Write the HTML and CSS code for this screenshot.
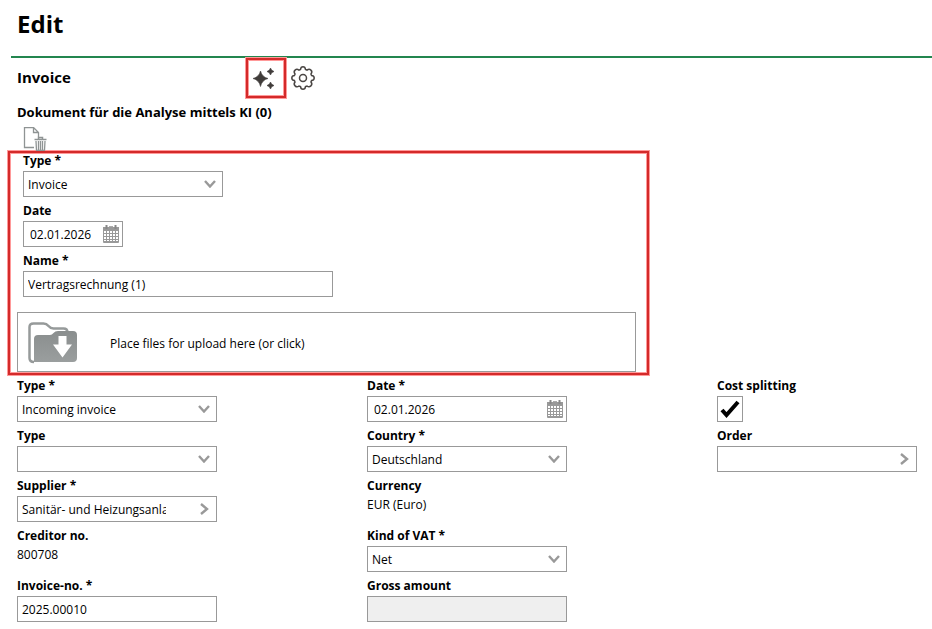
FILE: index.html
```html
<!DOCTYPE html>
<html lang="en">

<head>
    <meta charset="UTF-8">
    <meta name="viewport" content="width=device-width, initial-scale=1.0">
    <title>Edit</title>
    <link rel="stylesheet" href="styles.css">
</head>

<body>

    <!-- shared icons -->
    <svg class="sprite" aria-hidden="true">
        <symbol id="down" viewBox="0 0 12 8">
            <path d="M1 1l5 5.5L11 1" fill="none" stroke="#999" stroke-width="2.4" />
        </symbol>
        <symbol id="right" viewBox="0 0 9 12">
            <path d="M1 1l6 5L1 11" fill="none" stroke="#999" stroke-width="2.4" />
        </symbol>
        <symbol id="calendar" viewBox="0 0 16 18">
            <path d="M0 2h16v15q0 1-1 1H1q-1 0-1-1z" fill="#999" />
            <path d="M3.5 0v4M12.5 0v4" stroke="#888" stroke-width="2" />
            <path d="M6 1.500h4" stroke="#aaa" />
            <path d="M1 6h2v2H1zM4 6h2v2H4zM7 6h2v2H7zM10 6h2v2h-2zM13 6h2v2h-2zM1 9h2v2H1zM4 9h2v2H4zM7 9h2v2H7zM10 9h2v2h-2zM13 9h2v2h-2zM1 12h2v2H1zM4 12h2v2H4zM7 12h2v2H7zM10 12h2v2h-2zM13 12h2v2h-2zM1 15h2v1H1zM4 15h2v1H4zM7 15h2v1H7zM10 15h2v1h-2zM13 15h2v1h-2z" fill="#fff" />
        </symbol>
    </svg>

    <header class="page-header">
        <h1>Edit</h1>
    </header>

    <main>
        <div class="section-head">
            <h2>Invoice</h2>
            <button type="button" class="tool marked" aria-label="AI analysis">
                <svg width="22" height="24" viewBox="0 0 22 24">
                    <path d="M7.500 5q1.500 6 7.500 7.500Q9 14 7.500 20.500 6 14 0 12.500 6 11 7.500 5z" fill="#403c3a" stroke="#403c3a" stroke-width=".6" />
                    <path d="M17.500 2q.6 2.700 3.500 3.500-2.900.8-3.500 3.500-.6-2.700-3.500-3.500 2.900-.8 3.500-3.500zM17.500 16q.6 2.700 3.500 3.500-2.900.8-3.500 3.500-.6-2.700-3.500-3.500 2.900-.8 3.500-3.500z" fill="#403c3a" stroke="#403c3a" stroke-width=".6" />
                </svg>
            </button>
            <button type="button" class="tool" aria-label="Settings">
                <svg width="24" height="24" viewBox="0 0 24 24" fill="none" stroke="#4a4644" stroke-width="1.500">
                    <path d="M9.500 3.500Q9.800.8 12 .8t2.500 2.700l1.500.7q2.100-1.700 3.900-.1t.1 3.900l.6 1.500q2.600.3 2.600 2.500t-2.600 2.500L20 16q1.700 2.200-.1 3.900t-3.900.1l-1.500.6q-.3 2.600-2.500 2.600t-2.500-2.600L8 20q-2.100 1.700-3.900-.1T4 16l-.6-1.500Q.8 14.200.8 12t2.600-2.500L4 8Q2.300 5.800 4.100 4.100T8 4.200z" />
                    <circle cx="12" cy="12" r="3.500" />
                </svg>
            </button>
        </div>

        <h3>Dokument für die Analyse mittels KI (0)</h3>
        <button type="button" class="delete" aria-label="Delete document">
            <svg width="24" height="24" viewBox="0 0 24 24" fill="none" stroke="#8f9494">
                <path d="M11 20.500H1.500V.5h9l5 5V10M10.500.5v5h5" stroke-width="1.300" />
                <path d="M11.500 12.500h12M15.500 12v-1.500h4V12" stroke-width="1.500" />
                <path d="M13 14l.5 9.500h8L22 14M15.500 14v9M17.500 14v9M19.500 14v9" stroke-width="1.300" />
            </svg>
        </button>

        <section class="document">
            <div class="fields">
                <div class="field">
                    <label for="docType">Type *</label>
                    <div class="control">
                        <select id="docType"><option>Invoice</option></select>
                        <svg class="arrow"><use href="#down" /></svg>
                    </div>
                </div>
                <div class="field">
                    <label for="docDate">Date</label>
                    <div class="control short">
                        <input type="text" id="docDate" class="date" value="02.01.2026">
                        <svg class="calendar"><use href="#calendar" /></svg>
                    </div>
                </div>
                <div class="field">
                    <label for="docName">Name *</label>
                    <div class="control long">
                        <input type="text" id="docName" value="Vertragsrechnung (1)">
                    </div>
                </div>
            </div>
            <button type="button" class="upload">
                <svg width="50" height="42" viewBox="0 0 50 42">
                    <defs>
                        <linearGradient id="folder" x2="0" y2="1">
                            <stop offset="0" stop-color="#8a8e8e" />
                            <stop offset="1" stop-color="#9a9e9e" />
                        </linearGradient>
                    </defs>
                    <path d="M6 40Q1.500 40 1.500 36V5q0-3.500 4-3.500h10q3 0 5 2.500t5 2.500h10q4 0 4 4" fill="none" stroke="#969a9a" stroke-width="2.500" />
                    <path d="M6 40V17q0-4 4-4h12q2 0 3.500-2t4.500-2h15q4 0 4 4v23q0 4-4 4H5z" fill="url(#folder)" />
                    <path d="M30.500 14h8v8.500H44L34.500 35.500 25 22.500h5.500z" fill="#fff" />
                </svg>
                <span>Place files for upload here (or click)</span>
            </button>
        </section>

        <form class="columns">
            <div class="fields">
                <div class="field">
                    <label for="type">Type *</label>
                    <div class="control">
                        <select id="type"><option>Incoming invoice</option></select>
                        <svg class="arrow"><use href="#down" /></svg>
                    </div>
                </div>
                <div class="field">
                    <label for="subtype">Type</label>
                    <div class="control">
                        <select id="subtype"><option></option></select>
                        <svg class="arrow"><use href="#down" /></svg>
                    </div>
                </div>
                <div class="field">
                    <label for="supplier">Supplier *</label>
                    <div class="control">
                        <input type="text" id="supplier" class="lookup" value="Sanitär- und Heizungsanlagen">
                        <button type="button" class="open" aria-label="Choose supplier"><svg><use href="#right" /></svg></button>
                    </div>
                </div>
                <div class="field">
                    <label for="creditor">Creditor no.</label>
                    <output id="creditor">800708</output>
                </div>
                <div class="field">
                    <label for="invoiceNo">Invoice-no. *</label>
                    <div class="control">
                        <input type="text" id="invoiceNo" value="2025.00010">
                    </div>
                </div>
            </div>

            <div class="fields">
                <div class="field">
                    <label for="date">Date *</label>
                    <div class="control">
                        <input type="text" id="date" class="date" value="02.01.2026">
                        <svg class="calendar"><use href="#calendar" /></svg>
                    </div>
                </div>
                <div class="field">
                    <label for="country">Country *</label>
                    <div class="control">
                        <select id="country"><option>Deutschland</option></select>
                        <svg class="arrow"><use href="#down" /></svg>
                    </div>
                </div>
                <div class="field">
                    <label for="currency">Currency</label>
                    <output id="currency">EUR (Euro)</output>
                </div>
                <div class="field">
                    <label for="vat">Kind of VAT *</label>
                    <div class="control">
                        <select id="vat"><option>Net</option></select>
                        <svg class="arrow"><use href="#down" /></svg>
                    </div>
                </div>
                <div class="field">
                    <label for="gross">Gross amount</label>
                    <div class="control">
                        <input type="text" id="gross" disabled>
                    </div>
                </div>
            </div>

            <div class="fields">
                <div class="field">
                    <label for="split">Cost splitting</label>
                    <div class="control check">
                        <input type="checkbox" id="split" checked>
                        <svg class="tick" viewBox="0 0 20 18"><path d="M2 10l4.500 5L18 2" fill="none" stroke="#000" stroke-width="4" /></svg>
                    </div>
                </div>
                <div class="field">
                    <label for="order">Order</label>
                    <div class="control">
                        <input type="text" id="order" class="lookup">
                        <button type="button" class="open" aria-label="Choose order"><svg><use href="#right" /></svg></button>
                    </div>
                </div>
            </div>
        </form>
    </main>

</body>

</html>
```
FILE: styles.css
```css
* {
    box-sizing: border-box;
}

body {
    margin: 0;
    background-color: #fff;
    color: #000;
    font-family: "Open Sans", "Noto Sans", sans-serif;
    font-size: 12px;
    line-height: 16px;
}

h1,
h2,
h3 {
    margin: 0;
}

button,
input,
select {
    font: inherit;
    color: inherit;
}

button {
    padding: 0;
    border: none;
    background: none;
    cursor: pointer;
}

svg {
    display: block;
}

.sprite {
    display: none;
}

.page-header {
    margin-left: 11px;
    padding: 8px 6px 16px;
    border-bottom: 2px solid #23864f;
}

h1 {
    font-size: 24px;
    line-height: 32px;
}

.section-head {
    display: flex;
    align-items: center;
    padding-left: 17px;
}

h2 {
    width: 229px;
    padding-bottom: 2px;
    font-size: 15px;
    line-height: 20px;
}

.tool {
    display: flex;
    align-items: center;
    justify-content: center;
    width: 34px;
    height: 40px;
}

/* red highlight */
.marked,
.document {
    border: 2px solid #d42a2a;
    box-shadow: 0 0 0 1px #f99, inset 0 0 0 1px #f99;
}

.marked {
    width: 40px;
    padding-right: 4px;
}

h3 {
    margin: 4px 17px 5px;
    font-size: 13px;
    line-height: 20px;
}

.delete {
    display: block;
    margin-left: 23px;
}

.document {
    width: 641px;
    max-width: 100%;
    margin-left: 8px;
    padding: 2px 11px 1px 7px;
}

.document .fields {
    padding-left: 6px;
}

.fields {
    display: flex;
    flex-direction: column;
    gap: 8px;
}

.field {
    height: 42px;
}

.field label {
    display: block;
    width: max-content;
    line-height: 12px;
    padding-bottom: 4px;
    font-weight: bold;
}

.control {
    position: relative;
    width: 200px;
}

.short {
    width: 100px;
}

.long {
    width: 310px;
}

.check {
    width: 26px;
}

input,
select {
    display: block;
    width: 100%;
    height: 26px;
    margin: 0;
    padding: 1px 4px 0;
    border: 1px solid #999;
    border-radius: 0;
    background-color: #fff;
    appearance: none;
}

input:disabled {
    background-color: #efefef;
}

.date {
    padding-left: 6px;
}

.lookup {
    padding-right: 50px;
}

.arrow,
.calendar,
.tick,
.open {
    position: absolute;
    pointer-events: none;
}

.arrow {
    top: 9px;
    right: 7px;
    width: 12px;
    height: 8px;
}

.calendar {
    top: 4px;
    right: 4px;
    width: 16px;
    height: 18px;
}

.tick {
    top: 4px;
    left: 3px;
    width: 20px;
    height: 18px;
}

.open {
    top: 7px;
    right: 8px;
    pointer-events: auto;
}

.open svg {
    width: 9px;
    height: 12px;
}

output {
    display: block;
    line-height: 18px;
}

.upload {
    display: flex;
    align-items: center;
    gap: 32px;
    width: 100%;
    height: 60px;
    margin-top: 15px;
    padding: 2px 10px 0;
    border: 1px solid #999;
    text-align: left;
}

.upload span {
    padding-top: 2px;
}

.columns {
    display: flex;
    gap: 150px;
    padding: 5px 15px 7px 17px;
}
```
